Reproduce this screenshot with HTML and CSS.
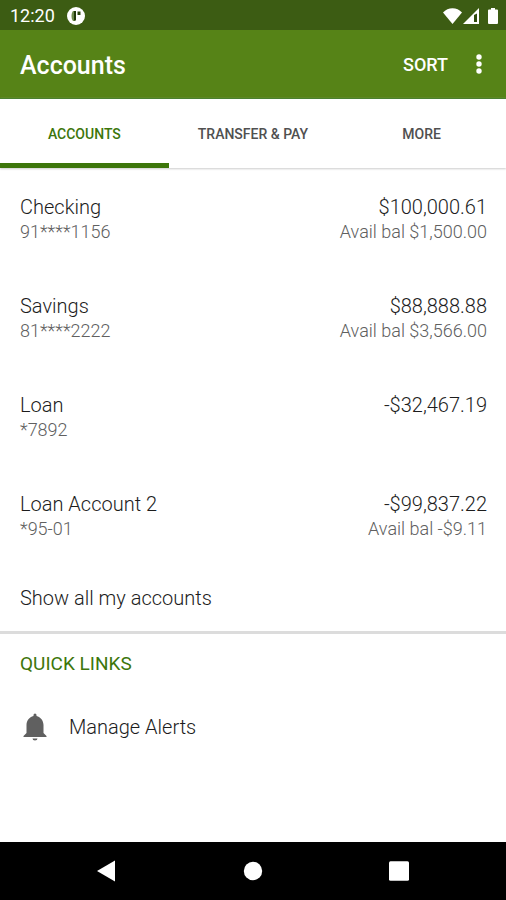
FILE: index.html
```html
<!DOCTYPE html>
<html lang="en">
<head>
  <meta charset="utf-8">
  <meta name="viewport" content="width=device-width, initial-scale=1">
  <title>Accounts</title>
  <link rel="stylesheet" href="styles.css">
</head>
<body>
  <div class="status-bar">
    <div class="status-group">
      <span>12:20</span>
      <svg class="status-app" viewBox="0 0 18 18" aria-hidden="true">
        <circle cx="9" cy="9" r="9" fill="#fff"/>
        <path d="M6 4h2v10H6C4 12 4 6 6 4z" fill="#6d8a4c"/>
        <path d="M7 4h2v9.500H7z" fill="#1f3808"/>
        <path d="M10.500 4.500h3V8h-3z" fill="#2c4710"/>
      </svg>
    </div>
    <div class="status-icons">
      <svg class="icon-wifi" viewBox="0 0 19 16" aria-hidden="true"><path d="M9.500 16 0 4.500C5-1.300 14-1.300 19 4.500z" fill="#fff"/></svg>
      <svg class="icon-signal" viewBox="0 0 16 16" aria-hidden="true"><path d="M16 0v16H0z" fill="#fff"/><path d="M11 7 14 5.500V14h-3z" fill="#304c0e"/></svg>
      <svg class="icon-battery" viewBox="0 0 10 16" aria-hidden="true"><path d="M3 0h4v1.500h2q1 0 1 1V15q0 1-1 1H1q-1 0-1-1V2.500q0-1 1-1h2z" fill="#fff"/></svg>
    </div>
  </div>

  <header class="app-bar">
    <h1 class="app-title">Accounts</h1>
    <button class="sort-button" type="button">SORT</button>
    <button class="menu-button" type="button" aria-label="More options">
      <svg class="icon-dots" viewBox="0 0 6 20" aria-hidden="true"><g fill="#fff"><circle cx="3" cy="3" r="2.700"/><circle cx="3" cy="10" r="2.700"/><circle cx="3" cy="17" r="2.700"/></g></svg>
    </button>
  </header>

  <nav class="tabs" aria-label="Sections">
    <a class="tab tab-active" href="#accounts" aria-current="page">ACCOUNTS</a>
    <a class="tab" href="#transfer">TRANSFER &amp; PAY</a>
    <a class="tab" href="#more">MORE</a>
  </nav>

  <main class="content">
    <ul class="accounts" id="accounts">
      <li class="account">
        <div><div class="name">Checking</div><div class="detail">91****1156</div></div>
        <div class="balance"><div class="name">$100,000.61</div><div class="detail">Avail bal $1,500.00</div></div>
      </li>
      <li class="account">
        <div><div class="name">Savings</div><div class="detail">81****2222</div></div>
        <div class="balance"><div class="name">$88,888.88</div><div class="detail">Avail bal $3,566.00</div></div>
      </li>
      <li class="account">
        <div><div class="name">Loan</div><div class="detail">*7892</div></div>
        <div class="balance"><div class="name">-$32,467.19</div></div>
      </li>
      <li class="account">
        <div><div class="name">Loan Account 2</div><div class="detail">*95-01</div></div>
        <div class="balance"><div class="name">-$99,837.22</div><div class="detail">Avail bal -$9.11</div></div>
      </li>
    </ul>
    <button class="show-all" type="button">Show all my accounts</button>

    <section class="quick-links">
      <h2 class="section-title">QUICK LINKS</h2>
      <a class="quick-link" href="#alerts">
        <svg class="icon-bell" viewBox="0 0 24 28" aria-hidden="true"><path d="M10.500 2a1.500 1.500 0 0 1 3 0v1c4.200 1.400 7 4.500 7 9v8l3 3V24H.5v-1l3-3v-8c0-4.500 2.800-7.600 7-9zM9.500 25.500h5a2.500 2 0 0 1-5 0z" fill="#606060"/></svg>
        <span>Manage Alerts</span>
      </a>
    </section>
  </main>

  <nav class="system-nav" aria-label="System">
    <button class="system-button" type="button" aria-label="Back"><svg class="icon-system" viewBox="0 0 22 22" aria-hidden="true"><path d="M1 11 19 .5v21z" fill="#fff"/></svg></button>
    <button class="system-button" type="button" aria-label="Home"><svg class="icon-system" viewBox="0 0 22 22" aria-hidden="true"><circle cx="11" cy="11" r="9.200" fill="#fff"/></svg></button>
    <button class="system-button" type="button" aria-label="Recent apps"><svg class="icon-system" viewBox="0 0 22 22" aria-hidden="true"><rect x="1" y="1.300" width="20" height="19.500" rx="1.500" fill="#fff"/></svg></button>
  </nav>
</body>
</html>
```
FILE: styles.css
```css
* {
  box-sizing: border-box;
}

body {
  display: flex;
  flex-direction: column;
  min-height: 100vh;
  margin: 0;
  background: #fff;
  color: #1c1c1c;
  font-family: Roboto, "Liberation Sans", sans-serif;
  font-size: 20px;
  font-weight: 300;
  line-height: 25px;
}

button {
  padding: 0;
  border: 0;
  background: none;
  color: inherit;
  font: inherit;
  text-align: left;
}

a {
  color: inherit;
  text-decoration: none;
}

svg {
  display: block;
}

.status-bar {
  display: flex;
  align-items: center;
  justify-content: space-between;
  padding: 3px 8px 2px 10px;
  background: #3c5c13;
  color: #fff;
  font-size: 18px;
  font-weight: 400;
}

.status-group {
  display: flex;
  align-items: center;
  gap: 12px;
}

.status-app {
  width: 18px;
  height: 18px;
}

.status-icons {
  display: flex;
  align-items: center;
}

.icon-wifi {
  width: 19px;
  height: 16px;
  margin-right: 1px;
}

.icon-signal {
  width: 16px;
  height: 16px;
  margin-right: 9px;
}

.icon-battery {
  width: 10px;
  height: 16px;
}

.app-bar {
  display: flex;
  align-items: center;
  padding: 20px;
  background: #568317;
  color: #fff;
}

.app-title {
  flex: 1;
  margin: 0;
  padding-top: 3px;
  font-size: 25px;
  font-weight: 500;
  line-height: 25px;
}

.sort-button {
  margin-right: 28px;
  font-size: 18px;
  font-weight: 500;
}

.menu-button {
  padding: 0 4px 0 0;
}

.icon-dots {
  width: 6px;
  height: 20px;
}

.tabs {
  display: grid;
  grid-template-columns: repeat(3, 1fr);
  border-top: 1px solid #4b8030;
  box-shadow: 0 1px 2px #ccc;
  color: #505050;
  font-size: 14px;
  font-weight: 500;
  text-align: center;
}

.tab {
  padding: 23px 0 16px;
  border-bottom: 5px solid transparent;
}

.tab-active {
  border-bottom-color: #3d760b;
  color: #3d760b;
}

.content {
  flex: 1;
}

.accounts {
  margin: 0;
  padding: 0;
  list-style: none;
}

.account {
  display: flex;
  justify-content: space-between;
  padding: 27px 19px 24px 20px;
}

.balance {
  text-align: right;
}

.detail {
  color: #606060;
  font-size: 18px;
  line-height: 23px;
}

.show-all {
  display: block;
  width: 100%;
  padding: 22px 20px 20px;
  border-bottom: 3px solid #dcdcdc;
}

.section-title {
  margin: 0;
  padding: 17px 20px;
  color: #3d760b;
  font-size: 19px;
  font-weight: 400;
  line-height: 25px;
}

.quick-link {
  display: flex;
  align-items: center;
  gap: 22px;
  padding: 20px 23px;
}

.icon-bell {
  width: 24px;
  height: 28px;
}

.system-nav {
  display: flex;
  justify-content: space-between;
  padding: 18px 96px;
  background: #000;
}

.icon-system {
  width: 22px;
  height: 22px;
}
```
